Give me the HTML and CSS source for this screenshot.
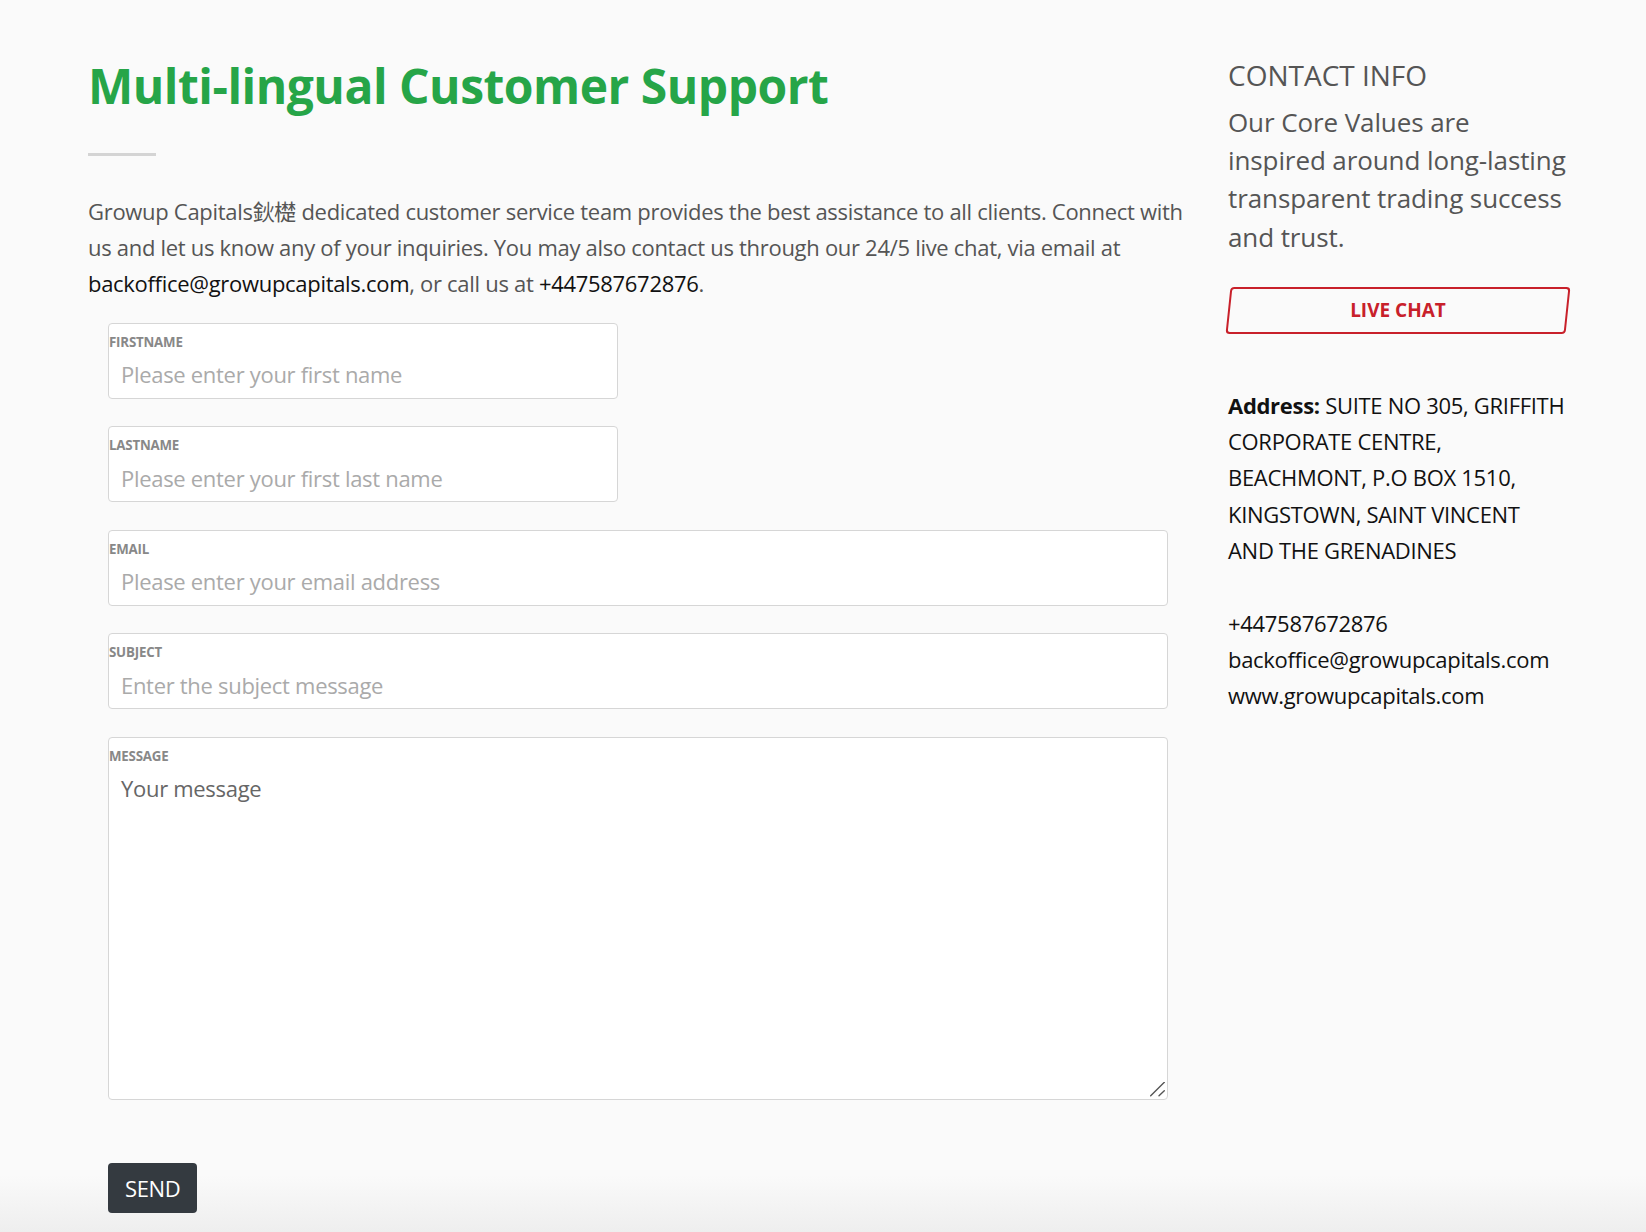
FILE: index.html
```html
<!DOCTYPE html>
<html lang="en">
<head>
    <meta charset="UTF-8">
    <meta name="viewport" content="width=device-width, initial-scale=1.0">
    <title>Growup Capitals - Contact</title>
    <link rel="stylesheet" href="styles.css">
</head>
<body>
    <div class="page">
        <div class="main">
            <h1 class="title">Multi-lingual Customer Support</h1>
            <div class="title-rule"></div>
            <p class="intro">Growup Capitals鈥檚 dedicated customer service team provides the best assistance to all clients. Connect with us and let us know any of your inquiries. You may also contact us through our 24/5 live chat, via email at <a href="#">backoffice@growupcapitals.com</a>, or call us at <a href="#">+447587672876</a>.</p>

            <form class="contact-form" onsubmit="return false;">
                <div class="field field-half">
                    <label for="firstname">FIRSTNAME</label>
                    <input type="text" id="firstname" placeholder="Please enter your first name">
                </div>
                <div class="field field-half">
                    <label for="lastname">LASTNAME</label>
                    <input type="text" id="lastname" placeholder="Please enter your first last name">
                </div>
                <div class="field">
                    <label for="email">EMAIL</label>
                    <input type="email" id="email" placeholder="Please enter your email address">
                </div>
                <div class="field">
                    <label for="subject">SUBJECT</label>
                    <input type="text" id="subject" placeholder="Enter the subject message">
                </div>
                <div class="field field-message">
                    <label for="message">MESSAGE</label>
                    <textarea id="message" placeholder="Your message"></textarea>
                    <!-- resize grip -->
                    <svg class="grip" width="16" height="16" viewBox="0 0 16 16">
                        <line x1="0.7" y1="13.7" x2="14.3" y2="0.3" />
                        <line x1="9" y1="13.7" x2="14.3" y2="8.7" />
                    </svg>
                </div>
                <button type="submit" class="send-btn">SEND</button>
            </form>
        </div>

        <div class="sidebar">
            <h3>CONTACT INFO</h3>
            <p class="core-values">Our Core Values are<br>inspired around <span class="nowrap">long-lasting</span> transparent trading success and trust.</p>
            <button class="live-chat">LIVE CHAT</button>

            <p class="address"><strong>Address:</strong> SUITE NO 305, GRIFFITH CORPORATE CENTRE, BEACHMONT, P.O BOX 1510, KINGSTOWN, SAINT VINCENT AND THE GRENADINES</p>

            <p class="contact-lines">
                +447587672876<br>
                backoffice@growupcapitals.com<br>
                www.growupcapitals.com
            </p>
        </div>
    </div>
</body>
</html>
```

FILE: styles.css
```css
body {
    margin: 0;
    font-family: "Open Sans", "Noto Sans CJK SC", sans-serif;
    background: linear-gradient(to bottom, #fafafa 0, #fafafa 1175px, #eeeeee 1232px);
    min-height: 1232px;
}

.page {
    display: flex;
    gap: 40px;
    padding-left: 88px;
}

.main {
    width: 1100px;
}

.title {
    margin: 57px 0 0;
    font-size: 48px;
    line-height: 1.2;
    font-weight: 700;
    letter-spacing: -0.5px;
    color: #26a548;
}

.title-rule {
    width: 68px;
    height: 3px;
    margin-top: 38px;
    background-color: #d4d4d4;
}

.intro {
    margin: 37px 0 0;
    font-size: 22px;
    line-height: 36px;
    letter-spacing: -0.3px;
    color: #555;
}

.intro a {
    color: #111;
    text-decoration: none;
}

.contact-form {
    margin: 22px 20px 0;
}

.field {
    position: relative;
    display: flex;
    flex-direction: column;
    box-sizing: border-box;
    background-color: #fff;
    border: 1px solid #d6d6d6;
    border-radius: 4px;
    padding-top: 9px;
    margin-bottom: 27.5px;
}

.field-half {
    width: 510px;
}

.field label {
    font-size: 13.3px;
    line-height: 18px;
    font-weight: 700;
    letter-spacing: -0.2px;
    color: #888;
}

.field input,
.field textarea {
    font-family: "Open Sans", sans-serif;
    font-size: 22px;
    letter-spacing: -0.3px;
    color: #333;
    border: none;
    outline: none;
    background: transparent;
    box-sizing: border-box;
}

.field input {
    height: 47px;
    padding: 0 12px;
}

.field input::placeholder {
    color: #aaa;
}

.field textarea {
    height: 334px;
    padding: 8px 12px;
    line-height: 30px;
    resize: none;
}

.field textarea::placeholder {
    color: #666;
}

.grip {
    position: absolute;
    right: 1px;
    bottom: 1px;
    pointer-events: none;
}

.grip line {
    stroke: #555;
    stroke-width: 1.4;
    stroke-linecap: round;
}

.send-btn {
    margin-top: 35.5px;
    height: 50px;
    padding: 0 17px;
    background-color: #343a40;
    color: #fff;
    border: none;
    border-radius: 4px;
    font-family: "Open Sans", sans-serif;
    font-size: 22px;
    letter-spacing: -0.4px;
    cursor: pointer;
}

.sidebar {
    width: 338px;
    padding-top: 56px;
}

.sidebar h3 {
    margin: 0;
    font-size: 28px;
    line-height: 38px;
    font-weight: 400;
    color: #555;
}

.core-values {
    margin: 9px -14px 0 0;
    font-size: 26px;
    line-height: 38.2px;
    letter-spacing: -0.1px;
    color: #555;
}

.nowrap {
    white-space: nowrap;
}

.live-chat {
    position: relative;
    display: flex;
    align-items: center;
    justify-content: center;
    width: 340px;
    height: 47px;
    margin-top: 31px;
    padding: 0;
    background: none;
    border: none;
    font-family: "Open Sans", sans-serif;
    font-size: 19px;
    font-weight: 700;
    color: #c8202a;
    cursor: pointer;
}

.live-chat::before {
    content: "";
    position: absolute;
    inset: 0;
    border: 2px solid #c8202a;
    border-radius: 4px;
    transform: skewX(-6deg);
}

.address {
    margin: 53px 0 0;
    font-size: 22px;
    line-height: 36.3px;
    letter-spacing: -0.3px;
    color: #111;
}

.contact-lines {
    margin: 36.3px 0 0;
    font-size: 22px;
    line-height: 36.3px;
    letter-spacing: -0.3px;
    color: #111;
}
```
